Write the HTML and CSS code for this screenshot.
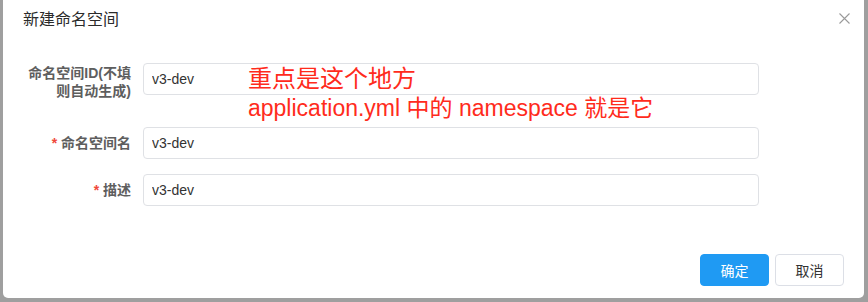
FILE: index.html
```html
<!DOCTYPE html>
<html>
<head>
    <title>新建命名空间</title>
    <link rel="stylesheet" href="styles.css">
</head>
<body>
    <div class="dialog">
        <div class="dialog-header">
            <span class="dialog-title">新建命名空间</span>
            <button class="dialog-close" type="button" aria-label="close">
                <svg width="11" height="11" viewBox="0 0 11 11">
                    <path d="M0.5 0.5 L10.5 10.5 M10.5 0.5 L0.5 10.5" stroke="#9a9a9a" stroke-width="1.1" fill="none"/>
                </svg>
            </button>
        </div>

        <form class="dialog-body">
            <div class="form-item form-item-tall">
                <label class="form-label form-label-wrap" for="nsId">命名空间ID(不填则自动生成)</label>
                <input class="form-input" type="text" id="nsId" value="v3-dev">
            </div>
            <div class="form-item">
                <label class="form-label" for="nsName"><span class="required">*</span> 命名空间名</label>
                <input class="form-input" type="text" id="nsName" value="v3-dev">
            </div>
            <div class="form-item">
                <label class="form-label" for="nsDesc"><span class="required">*</span> 描述</label>
                <input class="form-input" type="text" id="nsDesc" value="v3-dev">
            </div>
        </form>

        <div class="dialog-footer">
            <button class="btn btn-primary" type="button">确定</button>
            <button class="btn" type="button">取消</button>
        </div>

        <div class="note">
            <div class="note-big">重点是这个地方</div>
            <div class="note-small">application.yml 中的 namespace 就是它</div>
        </div>
    </div>
</body>
</html>
```

FILE: styles.css
```css
body {
    margin: 0;
    height: 302px;
    background-color: #9f9f9f;
    font-family: "Liberation Sans", "Noto Sans CJK SC", sans-serif;
    overflow: hidden;
}

.dialog {
    position: relative;
    display: flex;
    flex-direction: column;
    height: 298px;
    margin: 0 4px 0 3px;
    background-color: #fff;
    border-radius: 0 0 5px 5px;
    box-sizing: border-box;
}

.dialog-header {
    position: relative;
    padding: 8px 20px 0 20px;
}

.dialog-title {
    font-size: 16px;
    line-height: 24px;
    color: #2b2b2b;
}

.dialog-close {
    position: absolute;
    top: 13px;
    right: 14px;
    padding: 0;
    border: 0;
    background: none;
    line-height: 0;
    cursor: pointer;
}

.dialog-body {
    margin: 0;
    padding: 31px 105px 0 20px;
}

.form-item {
    display: flex;
    align-items: center;
    margin-bottom: 15px;
}

.form-item-tall {
    align-items: flex-start;
    margin-bottom: 27px;
}

.form-label {
    width: 120px;
    flex-shrink: 0;
    box-sizing: border-box;
    padding-right: 12px;
    text-align: right;
    font-size: 14px;
    font-weight: bold;
    color: #5e5e5e;
    line-height: 18px;
}

.form-label-wrap {
    padding-top: 1px;
}

.required {
    color: #f0483c;
}

.form-input {
    flex: 1;
    height: 32px;
    box-sizing: border-box;
    padding: 0 8px;
    border: 1px solid #dfe1e5;
    border-radius: 4px;
    font-family: "Liberation Sans", "Noto Sans CJK SC", sans-serif;
    font-size: 14px;
    color: #333;
    outline: none;
}

.dialog-footer {
    display: flex;
    justify-content: flex-end;
    gap: 6px;
    margin-top: auto;
    padding: 0 20px 12px 20px;
}

.btn {
    width: 69px;
    height: 32px;
    border: 1px solid #dcdfe6;
    border-radius: 4px;
    background-color: #fff;
    color: #333;
    font-family: "Liberation Sans", "Noto Sans CJK SC", sans-serif;
    font-size: 14px;
    cursor: pointer;
}

.btn-primary {
    background-color: #1f9af3;
    border-color: #1f9af3;
    color: #fff;
}

.note {
    position: absolute;
    left: 245px;
    top: 63px;
    color: #ff2b1c;
    white-space: nowrap;
}

.note-big {
    font-size: 24px;
    line-height: 32px;
}

.note-small {
    font-size: 23px;
    line-height: 27px;
}
```
